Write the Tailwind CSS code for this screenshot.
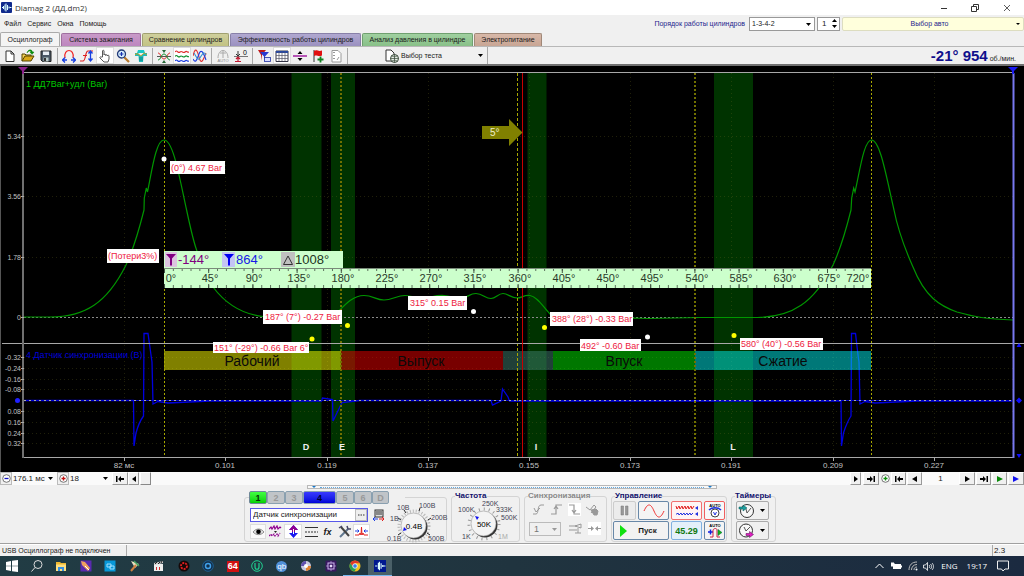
<!DOCTYPE html>
<html lang="ru">
<head>
<meta charset="utf-8">
<title>Diamag 2 (ДД.dm2)</title>
<script src="https://cdn.jsdelivr.net/npm/@tailwindcss/browser@4"></script>
</head>
<body class="flex min-h-screen flex-col bg-[#f0f0f0] font-['Liberation_Sans',Arial,sans-serif] text-[8px] leading-[10px] text-[#1a1a1a]">

<!-- Title bar -->
<header class="flex h-[15px] items-center bg-white pl-px">
  <svg class="size-[11px]" viewBox="0 0 11 11"><rect width="11" height="11" rx="1" fill="#102a8c"/><path d="M1 5.500h1.500V4v3M4 2.500v6M5 1.500v8M6.500 3v5M8 4.500v2M8.500 5.500h2" stroke="#dff" stroke-width="1" fill="none"/></svg>
  <h1 class="ml-[3px] flex-1 font-['Open_Sans',sans-serif] text-[8px] text-[#333]">Diamag 2 (ДД.dm2)</h1>
  <button aria-label="Свернуть" class="grid h-full w-[31px] place-items-center"><svg class="size-2" viewBox="0 0 8 8"><path d="M1 4.500h6" stroke="#333"/></svg></button>
  <button aria-label="Развернуть" class="grid h-full w-[31px] place-items-center"><svg class="size-2" viewBox="0 0 8 8"><path d="M.5 2.500h5v5h-5zM2.500 2V.5h5v5H6" fill="none" stroke="#333"/></svg></button>
  <button aria-label="Закрыть" class="grid h-full w-[34px] place-items-center"><svg class="size-2" viewBox="0 0 8 8"><path d="M1 1l6 6M7 1L1 7" stroke="#333" stroke-width=".8"/></svg></button>
</header>

<!-- Menu and engine settings -->
<div class="flex h-[17px] items-center">
  <nav class="flex flex-1 gap-[6px] pl-1 text-[7px]">
    <button>Файл</button><button>Сервис</button><button>Окна</button><button>Помощь</button>
  </nav>
  <label for="order" class="mr-1 text-[7px] text-[#1c1c8c]">Порядок работы цилиндров</label>
  <div class="relative mr-[2px]">
    <select id="order" class="block h-[14px] w-[66px] appearance-none border border-[#999] bg-white pl-[2px] text-[7px]"><option>1-3-4-2</option></select>
    <svg class="pointer-events-none absolute top-[6px] right-1 h-[3px] w-[5px]" viewBox="0 0 5 3"><path d="M0 0h5L2.500 3z"/></svg>
  </div>
  <div class="mr-[2px] flex h-[14px] w-[23px] border border-[#999] bg-white">
    <input aria-label="Номер цилиндра" value="1" class="w-3 pl-1 text-[8px] outline-none">
    <div class="flex flex-1 flex-col items-center justify-center gap-[2px]">
      <button aria-label="Больше" class="block h-1"><svg class="h-[3px] w-[5px]" viewBox="0 0 5 3"><path d="M0 3h5L2.500 0z"/></svg></button>
      <button aria-label="Меньше" class="block h-1"><svg class="h-[3px] w-[5px]" viewBox="0 0 5 3"><path d="M0 0h5L2.500 3z"/></svg></button>
    </div>
  </div>
  <button class="flex h-[14px] w-[182px] items-center rounded-[2px] border border-[#ddddc0] bg-[#ffffdc] text-[7px] text-[#1c1c8c]"><span class="flex-1">Выбор авто</span><svg class="mr-[3px] h-[2px] w-1" viewBox="0 0 4 2"><path d="M0 0h4L2 2z"/></svg></button>
</div>

<!-- Tabs -->
<nav class="flex h-[14px] items-end gap-px text-[7px]">
  <button class="h-[14px] w-[60px] rounded-t-[2px] border border-b-0 border-[#aaa] bg-[#f4f4f4]">Осциллограф</button>
  <button class="h-[13px] w-[80px] rounded-t-[2px] border border-b-0 border-[#a070a0] bg-linear-to-b from-[#c89ac8] to-[#bd86bf]">Система зажигания</button>
  <button class="h-[13px] w-[87px] rounded-t-[2px] border border-b-0 border-[#a0a070] bg-linear-to-b from-[#cfcf9c] to-[#c2c283]">Сравнение цилиндров</button>
  <button class="h-[13px] w-[131px] rounded-t-[2px] border border-b-0 border-[#8880a8] bg-linear-to-b from-[#b0a8d0] to-[#9a90c0]">Эффективность работы цилиндров</button>
  <button class="h-[13px] w-[111px] rounded-t-[2px] border border-b-0 border-[#70a070] bg-linear-to-b from-[#a0d0a0] to-[#88c088]">Анализ давления в цилиндре</button>
  <button class="h-[13px] w-[68px] rounded-t-[2px] border border-b-0 border-[#a08878] bg-linear-to-b from-[#d8b8a8] to-[#c8a594]">Электропитание</button>
</nav>

<!-- Toolbar -->
<div class="flex h-[20px] items-center border-t border-b-2 border-t-[#b8b8b8] border-b-[#707070] bg-[#f0f0f0] pl-px">
  <button aria-label="Новый" class="grid h-[17px] w-[18px] place-items-center"><svg class="size-[14px]" viewBox="0 0 14 14"><path d="M3 2h5l3 3v7.500H3zM8 2v3h3" fill="#fff" stroke="#333"/></svg></button>
  <button aria-label="Открыть" class="grid h-[17px] w-[18px] place-items-center"><svg class="size-[14px]" viewBox="0 0 14 14"><path d="M1 12V5h3l1 1h5v2" fill="#f4d35a" stroke="#554400"/><path d="M1 12l3-5h9l-3 5z" fill="#d8a818" stroke="#554400"/><path d="M6 4c2-3 4-2 4-1H9l2 2.500L13 3h-1.500C11 0 7 0 6 4z" fill="#0a8a0a" stroke="#0a8a0a" stroke-width=".5"/></svg></button>
  <button aria-label="Сохранить" class="grid h-[17px] w-[18px] place-items-center"><svg class="size-[14px]" viewBox="0 0 14 14"><path d="M2 2h10v10.500H3.500L2 11z" fill="#4a5866" stroke="#222"/><path d="M4 2.500h6V6H4z" fill="#e8eef4"/><path d="M4.500 8.500h5v4h-5z" fill="#bcc"/><path d="M5 9h2v3H5z" fill="#333"/></svg></button>
  <i class="mx-[2px] h-4 w-px bg-[#a8a8a8]"></i>
  <button aria-label="Период" class="grid h-[17px] w-[18px] place-items-center"><svg class="size-[14px]" viewBox="0 0 14 14"><path d="M3 9C1 -1 13 -1 11 9" fill="none" stroke="#f02828" stroke-width="1.200"/><path d="M1 11h4M9 11h4M3 8.500L.5 11 3 13.500M11 8.500l2.500 2.500-2.500 2.500" fill="none" stroke="#1840e0" stroke-width="1.300"/></svg></button>
  <button aria-label="Фронт" class="grid h-[17px] w-[18px] place-items-center"><svg class="size-[14px]" viewBox="0 0 14 14"><path d="M0 12h3c3 0 2-10 5-10h5" fill="none" stroke="#e02020" stroke-width="1.200"/><path d="M3 6.500h4" stroke="#e02020"/><path d="M10.500 2v10M8.500 4.500l2-2.500 2 2.500M8.500 9.500l2 2.500 2-2.500" fill="none" stroke="#1840e0" stroke-width="1.300"/></svg></button>
  <button aria-label="Рука" class="grid h-[17px] w-[18px] place-items-center border border-[#ddd] bg-white"><svg class="size-[14px]" viewBox="0 0 14 14"><path d="M4.500 8V2c0-1 1.500-1 1.500 0v4c0-1 1.700-1 1.700 0v.5c0-1 1.700-1 1.700 0V7c0-1 1.600-1 1.600 0v3l-1 3H6L2 9c-.5-1 .5-1.500 1.200-1z" fill="#fff" stroke="#444" stroke-width=".9"/></svg></button>
  <button aria-label="Лупа" class="grid h-[17px] w-[18px] place-items-center"><svg class="size-[14px]" viewBox="0 0 14 14"><path d="M8 8l5 5" stroke="#b8782a" stroke-width="2.200"/><circle cx="5.500" cy="5" r="4" fill="#d8f0ff" stroke="#223a78" stroke-width="1.300"/><path d="M3.500 5h4M5.500 3v4" stroke="#1830b0" stroke-width="1.200"/></svg></button>
  <button aria-label="Датчик" class="grid h-[17px] w-[18px] place-items-center"><svg class="size-[14px]" viewBox="0 0 14 14"><path d="M4 1h6l1 3H3z" fill="#18c8c8"/><path d="M1 4h3l3 3 3-3h3v3H9.500L9 13H5L4.500 7H1z" fill="#20b8b8"/><path d="M1 6c3-4 5 3 7 0s3-2 5 0" fill="none" stroke="#c8a018" stroke-width="1"/><path d="M5 9h4M5 11h4" stroke="#088"/></svg></button>
  <i class="mx-[2px] h-4 w-px bg-[#a8a8a8]"></i>
  <button aria-label="Центр" class="grid h-[17px] w-[18px] place-items-center"><svg class="size-[14px]" viewBox="0 0 14 14"><path d="M0 7.500h14" stroke="#555"/><path d="M1 4c3 0 3 6 6 6s3-6 6-6" fill="none" stroke="#e03030"/><path d="M1 11c3 0 3-6 6-6s3 6 6 6" fill="none" stroke="#109030"/><path d="M5 1h4L7 4zM5 14h4l-2-3z" fill="#286a38"/></svg></button>
  <button aria-label="Раздельно" class="grid h-[17px] w-[18px] place-items-center border border-[#ddd] bg-white"><svg class="size-[14px]" viewBox="0 0 14 14" fill="none" stroke-width="1.200"><path d="M0 3c2-3 3 2 5 0s3 2 5 0 2 1 4 0" stroke="#e03030"/><path d="M0 7.500c2-3 3 2 5 0s3 2 5 0 2 1 4 0" stroke="#109030"/><path d="M0 12c2-3 3 2 5 0s3 2 5 0 2 1 4 0" stroke="#2040e0"/></svg></button>
  <button aria-label="Совместно" class="grid h-[17px] w-[18px] place-items-center"><svg class="size-[14px]" viewBox="0 0 14 14" fill="none" stroke-width="1.100"><path d="M0 7C2-2 4 0 6 8s4 4 7-4" stroke="#e03030"/><path d="M0 10c3 5 4 0 6-5s4-3 7 6" stroke="#2040e0"/><path d="M1 4c2 3 3 7 5 6s4-10 7-4" stroke="#3090d0"/></svg></button>
  <i class="mx-[2px] h-4 w-px bg-[#a8a8a8]"></i>
  <button aria-label="Авто" class="grid h-[17px] w-[18px] place-items-center"><svg class="size-[14px]" viewBox="0 0 14 14"><path d="M2 9C2-1 12-1 12 9M7 1v8M4 4h6" fill="none" stroke="#aaa"/><text x="7" y="13" font-size="4" text-anchor="middle" fill="#888">AUTO</text></svg></button>
  <button aria-label="Ноль" class="grid h-[17px] w-[18px] place-items-center"><svg class="size-[14px]" viewBox="0 0 14 14"><path d="M0 7.500h14" stroke="#777"/><path d="M4 7V2M2 5l2 2 2-2" fill="none" stroke="#333"/><path d="M4 8v5M2 10l2-2 2 2M1 12.500h6" fill="none" stroke="#c01830" stroke-width="1.200"/><text x="9" y="6" font-size="7">0</text></svg></button>
  <i class="mx-[2px] h-4 w-px bg-[#a8a8a8]"></i>
  <button aria-label="Фильтр" class="grid h-[17px] w-[18px] place-items-center"><svg class="size-[14px]" viewBox="0 0 14 14"><path d="M1 1h8L5 6v6L4 6z" fill="#c01818"/><path d="M3 3h9L8 7.500V13L7 7.500z" fill="#2838d0"/><rect x="7.500" y="8.500" width="6" height="4" fill="#d8dcff" stroke="#2030a0" stroke-width=".8"/></svg></button>
  <button aria-label="Таблица" class="grid h-[17px] w-[18px] place-items-center border border-[#ddd] bg-white"><svg class="size-[14px]" viewBox="0 0 14 14"><path d="M1 2h12v10.500H1z" fill="#fff" stroke="#334"/><path d="M1 3h12" stroke="#2848a0" stroke-width="2"/><path d="M4 3v9M7 3v9M10 3v9M1 6.500h12M1 9.500h12" stroke="#556" stroke-width=".7"/></svg></button>
  <button aria-label="Разделитель" class="grid h-[17px] w-[18px] place-items-center"><svg class="size-[14px]" viewBox="0 0 14 14"><path d="M0 7h14" stroke="#a020a0" stroke-width="1.500"/><path d="M4.500 5L7 2l2.500 3zM4.500 9L7 12l2.500-3z"/></svg></button>
  <button aria-label="Метка" class="grid h-[17px] w-[18px] place-items-center"><svg class="size-[14px]" viewBox="0 0 14 14"><path d="M3 1v12" stroke="#333"/><path d="M3 2c3-2 4 1 8-.5v5c-4 1.500-5-1-8 .5z" fill="#e01010"/><path d="M6.500 10.500h6M9.500 7.500v6" stroke="#108020" stroke-width="1.800"/></svg></button>
  <button aria-label="Отчёт" class="grid h-[17px] w-[18px] place-items-center"><svg class="size-[14px]" viewBox="0 0 14 14"><path d="M3 1.500h6l3 3V13H3z" fill="#fff" stroke="#999"/><path d="M4 3.500h2M4 6.500h2M4 9.500h2M8 11l2-3" stroke="#999"/></svg></button>
  <i class="mx-[2px] h-4 w-px bg-[#a8a8a8]"></i>
  <button class="ml-[34px] flex h-[17px] w-[104px] items-center border-r border-[#a8a8a8] pl-px text-[7px]"><svg class="mr-[2px] size-[14px]" viewBox="0 0 14 14"><path d="M1 1h5l3 3v8H1z" fill="#fff" stroke="#333"/><circle cx="9.500" cy="9.500" r="4" fill="#e8f0e8" stroke="#334433"/><path d="M5.500 9.500h8M9.500 5.500v8M7 7c2 1 3 1 5 0M7 12c2-1 3-1 5 0" stroke="#334433" stroke-width=".7" fill="none"/></svg><span class="flex-1 text-left">Выбор теста</span><svg class="mr-1 h-[3px] w-[5px]" viewBox="0 0 5 3"><path d="M0 0h5L2.500 3z"/></svg></button>
  <p class="ml-auto flex items-baseline gap-[2px] pr-[8px]"><b class="text-[15px] leading-[17px] text-[#10108c]">-21° 954</b><span class="text-[7px]">об./мин.</span></p>
</div>

<!-- Oscillogram -->
<main class="bg-black">
<svg class="block h-auto w-full" viewBox="0 66 1024 406" role="img" aria-label="Осциллограмма">
  <defs>
    <pattern id="ticks" x="164" y="267" width="8.84" height="21" patternUnits="userSpaceOnUse"><path d="M.5 1v3M.5 18v3" stroke="#5a705a"/></pattern>
    <pattern id="long" x="164" y="267" width="44.2" height="21" patternUnits="userSpaceOnUse"><path d="M.5 1v5M.5 17v4" stroke="#405040"/></pattern>
  </defs>
  <path d="M.5 66v406" stroke="#555"/>
  <g fill="#003300"><rect x="291.500" y="73" width="30" height="384"/><rect x="331" y="73" width="24" height="384"/><rect x="527.500" y="73" width="19" height="384"/><rect x="714" y="73" width="39" height="384"/></g>
  <path d="M124.500 73v384M225.500 73v384M327.500 73v384M428.500 73v384M529.500 73v384M630.500 73v384M731.500 73v384M833.500 73v384M934.500 73v384M24 136.500h989M24 196.500h989M24 257.500h989M24 357.500h989M24 368.500h989M24 379.500h989M24 389.500h989M24 411.500h989M24 422.500h989M24 433.500h989M24 443.500h989" stroke="#6a6a20" stroke-opacity=".3" stroke-dasharray="1 3" fill="none"/>
  <path d="M24 317.500h989" stroke="#8a8a8a" stroke-dasharray="2 2"/>

  <!-- Cylinder pressure -->
  <path d="M23 317H50C85 317 107 303 126 265C133 250 139 230 144 210L144.300 198L146.300 188L147.500 192C152 170 156 140 164 140C173 140 179 175 186.600 210C190 226 193 240 196.600 250C202 267 207 277 213 287C225 303 240 314 263 316.500C290 318 325 318 335 315C344 306 352 295.500 364 295.500C373 295.500 376 300 384 300C392 300 397 295.500 405 295.500C413 295.500 418 299 424 298C432 297 436 295 444 295.500C452 296 456 299 463 298C468 297 470 293.500 476 293.500C483 293.500 485 298.500 491 298.500C496 298.500 498 293.500 503 293.500C508 293.500 511 298 517 298C522 298 523 295 530 295.500C538 297 543 307 550 314C556 319 570 318 633 318L648 318.500L700 317.500H757.500C792 317 814 303 833 265C840 250 846 230 851 210L851.700 198L853.700 188L855 192C860 170 864 140 871.500 140C880 140 886 175 894 210C898 230 905 249 913 267C925 297 940 306 957 312C975 317 985 319 1013 320" fill="none" stroke="#009600" stroke-width="1.200"/>

  <!-- Sync sensor -->
  <path d="M23 400.500h989" stroke="#0000c8"/>
  <path d="M23 400.500H133.500L134 446L136 433Q139 422 143.500 416L144 333.500H148L151 355L152 362L153 404L158 401.500L168 403L210 401H321.500L322.500 398L332.500 399.500L333 421L342 402.500L360 400.500H491L492.500 405L501 401L502.500 389L508 397L509.500 401H840.500L841 400L841.500 446L843.500 433Q847 422 851 416L851.500 333.500H855.500L858 355L859 362L860 404L865 401.500L875 403L917 401H1012" fill="none" stroke="#0000e0" stroke-width="1.300"/>
  <path d="M24 400.500h989" stroke="#aaaaaa" stroke-dasharray="2 3"/>

  <!-- Stroke phases -->
  <g fill-opacity=".5"><rect x="164" y="351" width="177" height="19" fill="#ffff00"/><rect x="341" y="351" width="162" height="19" fill="#f00000"/><rect x="503" y="351" width="50" height="19" fill="#408070"/><rect x="553" y="351" width="142" height="19" fill="#00ee00"/><rect x="695" y="351" width="176" height="19" fill="#00f0f0"/></g>
  <g font-size="14" text-anchor="middle" fill="#0a0a0a"><text x="252" y="366">Рабочий</text><text x="421" y="366">Выпуск</text><text x="624" y="366">Впуск</text><text x="783" y="366">Сжатие</text></g>
  <g fill="none" stroke="#a8a800"><path d="M164.500 73v384M871.500 73v384" stroke-dasharray="2 2"/><path d="M341 73v384M695 73v384" stroke="#707000" stroke-width="2" stroke-dasharray="2 2"/><path d="M517.500 73v384" stroke-dasharray="3 2"/></g>

  <!-- Axes -->
  <path d="M22 72.500h991M2 343.500h1022M22 457.500h991" stroke="#a8a8a8"/>
  <path d="M23 73v385" stroke="#707070" stroke-width="2"/><path d="M1013.500 73v385" stroke="#7878f0" stroke-width="2"/>
  <path d="M21 136.500h3M21 196.500h3M21 257.500h3M21 317.500h3M21 357.500h3M21 368.500h3M21 379.500h3M21 389.500h3M21 411.500h3M21 422.500h3M21 433.500h3M21 443.500h3" stroke="#aaa"/>
  <path d="M124.500 457v4M225.500 457v4M327.500 457v4M428.500 457v4M529.500 457v4M630.500 457v4M731.500 457v4M833.500 457v4M934.500 457v4" stroke="#aaa"/>
  <path d="M522.500 73v384" stroke="#c80000"/>
  <path d="M482 126h27v-7l13.500 13.500L509 146v-7h-27z" fill="#808000"/>
  <text x="490" y="136" font-size="10" fill="#eeeecc">5°</text>
  <path d="M18 67h10l-4 4v3h-2v-3z" fill="#8a208a"/><path d="M1008 67h10l-4 4v3h-2v-3z" fill="#1818f0"/>
  <circle cx="17.500" cy="400.500" r="2.500" fill="#2020ff"/>
  <path d="M1016.500 347l2.500-4 2.500 4zM1016 400.500l3-3 3 3-3 3zM1016.500 454h5l-2.500 4z" fill="#1010ff"/>
  <g font-size="7" text-anchor="end" fill="#c0c0c0"><text x="21" y="139">5.34</text><text x="21" y="199">3.56</text><text x="21" y="260">1.78</text><text x="21" y="320">0</text><text x="21" y="360">-0.32</text><text x="21" y="371">-0.24</text><text x="21" y="382">-0.16</text><text x="21" y="392">-0.08</text><text x="21" y="414">0.08</text><text x="21" y="425">0.16</text><text x="21" y="436">0.24</text><text x="21" y="446">0.32</text></g>
  <g font-size="8" text-anchor="middle" fill="#c0c0c0"><text x="124" y="468">82 мс</text><text x="225" y="468">0.101</text><text x="327" y="468">0.119</text><text x="428" y="468">0.137</text><text x="529" y="468">0.155</text><text x="630" y="468">0.173</text><text x="731" y="468">0.191</text><text x="833" y="468">0.209</text><text x="934" y="468">0.227</text></g>
  <g font-size="9" font-weight="bold" text-anchor="middle" fill="#f0f0f0"><text x="306" y="450">D</text><text x="342" y="450">E</text><text x="536" y="450">I</text><text x="733" y="450">L</text></g>
  <text x="26" y="87" font-size="9" fill="#00c800">1 ДД7Bar+удл (Bar)</text>
  <text x="26" y="358" font-size="9" fill="#0000d8">4 Датчик синхронизации (В)</text>

  <!-- Degree ruler -->
  <rect x="164" y="251" width="179" height="17" fill="#ccffcc"/>
  <rect x="165" y="252" width="12" height="15" fill="#dcc4e0"/><path d="M166 254h10l-4 4.500v7h-2v-7z" fill="#800080"/>
  <rect x="222" y="252" width="13" height="15" fill="#c4c4f4"/><path d="M224 254h10l-4 4.500v7h-2v-7z" fill="#0000f0"/>
  <rect x="281" y="252" width="14" height="15" fill="#c0c0c0"/><path d="M283.500 264.500h9l-4.500-8.500z" fill="none" stroke="#333"/>
  <g font-size="13"><text x="178" y="264" fill="#800080">-144°</text><text x="236" y="264" fill="#1818e8">864°</text><text x="295" y="264" fill="#223322">1008°</text></g>
  <rect x="164" y="268" width="707" height="20" fill="#ccffcc"/><rect x="164" y="268" width="707" height="20" fill="url(#ticks)"/><rect x="164" y="268" width="707" height="20" fill="url(#long)"/><path d="M164 268.500h707" stroke="#7a8a7a"/>
  <g font-size="11" text-anchor="middle" fill="#2a3a2a"><text x="171" y="282">0°</text><text x="210" y="282">45°</text><text x="254" y="282">90°</text><text x="299" y="282">135°</text><text x="343" y="282">180°</text><text x="387" y="282">225°</text><text x="431" y="282">270°</text><text x="475" y="282">315°</text><text x="520" y="282">360°</text><text x="564" y="282">405°</text><text x="608" y="282">450°</text><text x="652" y="282">495°</text><text x="697" y="282">540°</text><text x="741" y="282">585°</text><text x="785" y="282">630°</text><text x="829" y="282">675°</text><text x="858" y="282">720°</text></g>

  <!-- Measurement callouts -->
  <g fill="#fff"><rect x="170" y="161" width="55" height="13"/><rect x="107" y="249" width="52" height="14"/><rect x="263" y="310" width="79" height="14"/><rect x="408" y="296" width="59" height="14"/><rect x="550" y="312" width="83" height="14"/><rect x="213" y="342" width="96" height="11"/><rect x="580" y="339" width="61" height="12"/><rect x="740" y="338" width="83" height="12"/></g>
  <g font-size="9" fill="#ee2040"><text x="171" y="171">(0°) 4.67 Bar</text><text x="265" y="320">187° (7°) -0.27 Bar</text><text x="410" y="306">315° 0.15 Bar</text><text x="108" y="259">(Потери3%)</text><text x="552" y="322">388° (28°) -0.33 Bar</text><text x="214" y="351">151° (-29°) -0.66 Bar 6°</text><text x="581" y="349">492° -0.60 Bar</text><text x="741" y="347">580° (40°) -0.56 Bar</text></g>
  <g fill="#fff"><circle cx="164" cy="159" r="2.500"/><circle cx="473.500" cy="311.500" r="2.500"/><circle cx="647.500" cy="337" r="2.500"/></g>
  <g fill="#ffff00"><circle cx="312" cy="339" r="2.500"/><circle cx="347.500" cy="325.500" r="2.500"/><circle cx="544.500" cy="327.500" r="2.500"/><circle cx="734" cy="335.500" r="2.500"/></g>
</svg>
</main>

<!-- Time navigation -->
<div class="flex h-[13px] items-stretch bg-[#fafafa] text-[8px]">
  <button aria-label="Сжать" class="grid w-3 place-items-center border border-[#bbb] bg-[#f0f0f0]"><svg class="size-[9px]" viewBox="0 0 9 9"><circle cx="4.500" cy="4.500" r="3.800" fill="#fff" stroke="#555" stroke-width=".8"/><path d="M2.500 4.500h4" stroke="#1010c0" stroke-width="1.300"/></svg></button>
  <div class="relative flex"><select aria-label="Длительность" class="w-[44px] appearance-none pl-px"><option>176.1 мс</option></select><svg class="pointer-events-none absolute top-[5px] right-[3px] h-[3px] w-[5px]" viewBox="0 0 5 3"><path d="M0 0h5L2.500 3z"/></svg></div>
  <button aria-label="Растянуть" class="ml-px grid w-3 place-items-center border border-[#bbb] bg-[#f0f0f0]"><svg class="size-[9px]" viewBox="0 0 9 9"><circle cx="4.500" cy="4.500" r="3.800" fill="#fff" stroke="#555" stroke-width=".8"/><path d="M2.500 4.500h4M4.500 2.500v4" stroke="#c01010" stroke-width="1.300"/></svg></button>
  <div class="relative flex"><select aria-label="Масштаб" class="w-[42px] appearance-none pl-px"><option>18</option></select><svg class="pointer-events-none absolute top-[5px] right-[3px] h-[3px] w-[5px]" viewBox="0 0 5 3"><path d="M0 0h5L2.500 3z"/></svg></div>
  <button aria-label="В начало" class="ml-px grid w-4 place-items-center border border-[#fff] border-r-[#999] border-b-[#999] bg-[#f0f0f0]"><svg class="h-[6px] w-2" viewBox="0 0 8 6"><path d="M0 0h1.500v6H0zM2 3l3-3v2h3v2H5v2z"/></svg></button>
  <button aria-label="Влево" class="grid w-[11px] place-items-center border border-[#fff] border-r-[#999] border-b-[#999] bg-[#f0f0f0]"><svg class="h-[6px] w-1" viewBox="0 0 4 6"><path d="M4 0v6L0 3z"/></svg></button>
  <button aria-label="Ползунок" class="ml-px w-[11px] border border-[#fff] border-r-[#888] border-b-[#888] bg-[#f0f0f0]"></button>
  <div class="flex-1"></div>
  <button aria-label="Вправо" class="grid w-[11px] place-items-center border border-[#fff] border-r-[#999] border-b-[#999] bg-[#f0f0f0]"><svg class="h-[6px] w-1" viewBox="0 0 4 6"><path d="M0 0v6l4-3z"/></svg></button>
  <button aria-label="В конец" class="ml-[2px] grid w-4 place-items-center border border-[#fff] border-r-[#999] border-b-[#999] bg-[#f0f0f0]"><svg class="h-[6px] w-2" viewBox="0 0 8 6"><path d="M8 0H6.500v6H8zM6 3L3 0v2H0v2h3v2z"/></svg></button>
  <button aria-label="Добавить кадр" class="grid w-3 place-items-center bg-[#f0f0f0]"><svg class="size-[9px]" viewBox="0 0 9 9"><circle cx="4.500" cy="4.500" r="3.800" fill="#fff" stroke="#555" stroke-width=".8"/><path d="M2.500 4.500h4M4.500 2.500v4" stroke="#109010" stroke-width="1.300"/></svg></button>
  <button aria-label="Первый кадр" class="grid w-[15px] place-items-center border border-[#fff] border-r-[#999] border-b-[#999] bg-[#f0f0f0]"><svg class="h-[6px] w-2" viewBox="0 0 8 6"><path d="M0 0h1.500v6H0zM2 3l3-3v2h3v2H5v2z"/></svg></button>
  <button aria-label="Предыдущий кадр" class="ml-px grid w-[15px] place-items-center border border-[#fff] border-r-[#999] border-b-[#999] bg-[#f0f0f0]"><svg class="h-[6px] w-[6px]" viewBox="0 0 6 6"><path d="M5 0v6L0 3z"/></svg></button>
  <output class="grid w-[37px] place-items-center">1</output>
  <button aria-label="Следующий кадр" class="grid w-4 place-items-center border border-[#fff] border-r-[#999] border-b-[#999] bg-[#f0f0f0]"><svg class="h-[6px] w-[6px]" viewBox="0 0 6 6"><path d="M1 0v6l5-3z"/></svg></button>
  <button aria-label="Последний кадр" class="ml-px grid w-[15px] place-items-center border border-[#fff] border-r-[#999] border-b-[#999] bg-[#f0f0f0]"><svg class="h-[6px] w-2" viewBox="0 0 8 6"><path d="M8 0H6.500v6H8zM6 3L3 0v2H0v2h3v2z"/></svg></button>
  <button aria-label="Воспроизвести" class="ml-px grid w-[15px] place-items-center border border-[#fff] border-r-[#999] border-b-[#999] bg-[#f0f0f0]"><svg class="size-[6px]" viewBox="0 0 6 6"><path d="M0 0v6l6-3z" fill="#0a8a0a"/></svg></button>
  <button aria-label="Воспроизвести всё" class="ml-px grid w-4 place-items-center border border-[#fff] border-r-[#999] border-b-[#999] bg-[#f0f0f0]"><svg class="size-[6px]" viewBox="0 0 6 6"><path d="M0 0v6l6-3z" fill="#1010f0"/></svg></button>
</div>

<!-- Control panel -->
<section class="flex flex-1 flex-col border-b border-[#a0a0a0]">
  <div class="mx-auto flex h-1 w-[410px] items-center justify-between border border-[#b8b8b8] bg-[#f8f8f8] px-1"><svg class="h-[2px] w-1" viewBox="0 0 4 2"><path d="M0 0h4L2 2z" fill="#1878c8"/></svg><i class="mx-1 h-px flex-1 border-t border-dotted border-[#60a8e0]"></i><svg class="h-[2px] w-1" viewBox="0 0 4 2"><path d="M0 0h4L2 2z" fill="#1878c8"/></svg></div>
  <div class="flex flex-1 justify-center gap-1 pt-[2px] pr-1 pb-px">

    <fieldset class="h-[51px] w-[203px] rounded-[3px] border border-[#d4d4d4]">
      <legend class="ml-1 flex h-[13px] pr-4 text-[9px] font-bold text-[#999]">
        <button class="w-[18px] rounded-[2px] border border-[#708898] bg-linear-to-b from-[#40ff40] to-[#00d000] text-[#053005]">1</button>
        <button class="w-[18px] rounded-[2px] border border-[#8aa0b0] bg-[#c0c4c8]">2</button>
        <button class="w-[18px] rounded-[2px] border border-[#8aa0b0] bg-[#c0c4c8]">3</button>
        <button class="w-[33px] rounded-[2px] border border-[#8aa0b0] bg-linear-to-b from-[#3838ff] to-[#0000d8] text-[#000030]">4</button>
        <button class="w-[18px] rounded-[2px] border border-[#8aa0b0] bg-[#c0c4c8]">5</button>
        <button class="w-[18px] rounded-[2px] border border-[#8aa0b0] bg-[#c0c4c8]">6</button>
        <button class="w-[17px] rounded-[2px] border border-[#8aa0b0] bg-[#c0c4c8]">D</button>
      </legend>
      <div class="flex pl-[5px]">
        <div class="flex w-[136px] flex-col gap-[2px] pt-1">
          <div class="flex gap-1">
            <div class="flex h-[14px] w-[118px] items-center border border-[#5858e8] bg-white"><input aria-label="Название канала" value="Датчик синхронизации" class="min-w-0 flex-1 pl-[2px] text-[8px] outline-none"><button aria-label="Выбрать датчик" class="grid h-3 w-[12px] place-items-center border border-[#bbb] bg-[#eee]"><svg class="h-[2px] w-2" viewBox="0 0 8 2"><path d="M1 1h1.500M3.500 1H5M6 1h1.500" stroke="#333"/></svg></button></div>
            <button aria-label="Разъём"><svg class="size-[13px]" viewBox="0 0 13 13"><rect x="3" y="1" width="8" height="7" fill="#ddd" stroke="#333"/><path d="M4 3h6M4 5h6" stroke="#333"/><path d="M6 10H2M3 8l-2 2 2 2" fill="none" stroke="#2040e0"/><path d="M7 10h5M10 8l2 2-2 2" fill="none" stroke="#e02020"/></svg></button>
          </div>
          <div class="flex gap-px">
            <button aria-label="Показать" class="grid h-[15px] w-4 place-items-center border border-[#ddd] bg-[#fafafa]"><svg class="size-[13px]" viewBox="0 0 13 13"><path d="M1 7c3-4 8-4 11 0-3 3.500-8 3.500-11 0z" fill="#ddd" stroke="#777" stroke-width=".8"/><circle cx="6.500" cy="6.800" r="2.300"/></svg></button>
            <button aria-label="Инверсия" class="grid h-[15px] w-4 place-items-center"><svg class="size-[13px]" viewBox="0 0 13 13" fill="none" stroke="#900090" stroke-width="1.200"><path d="M0 4l2-2 1 2 2-3 1 3 2-3 1 3 2-2 1 1"/><path d="M0 11l2-2 1 2 2-2 1 2 2-2 1 2 2-3" stroke-dasharray="2 1"/><path d="M5 6h3L6.500 8z" fill="#222" stroke="none"/></svg></button>
            <button aria-label="Смещение" class="grid h-[15px] w-[18px] place-items-center border border-[#ddd] bg-white"><svg class="size-[13px]" viewBox="0 0 13 13"><path d="M2 5l4.500-5L11 5H8v3h3l-4.500 5L2 8h3V5z" fill="#1818f0"/><path d="M2 5l4.500-5L11 5H8v2H5V5z" fill="#900090"/><path d="M6.500 4v5" stroke="#fff"/></svg></button>
            <button aria-label="Линии" class="grid h-[15px] w-4 place-items-center"><svg class="size-[13px]" viewBox="0 0 13 13"><path d="M0 2.500h13M0 11.500h13" stroke="#333"/><path d="M0 7h13" stroke="#333" stroke-dasharray="2 1"/></svg></button>
            <button aria-label="Функция" class="h-[15px] w-[15px] text-[9px] font-bold italic">fx</button>
            <button aria-label="Настройка" class="grid h-[15px] w-4 place-items-center"><svg class="size-[13px]" viewBox="0 0 13 13"><path d="M2 12l8-8" stroke="#607890" stroke-width="2"/><path d="M3 2l8 9" stroke="#444" stroke-width="2"/><path d="M9 1l1 3 3 0M1 3l3-2" stroke="#446" fill="none" stroke-width="1.500"/></svg></button>
            <button aria-label="Фильтр пиков" class="grid h-[15px] w-[17px] place-items-center border border-[#ddd] bg-white"><svg class="size-[13px]" viewBox="0 0 13 13" fill="none"><path d="M0 10h4l1-2 1 2 .5-8 .5 8 1-2 1 2h4" stroke="#e02020"/><path d="M0 6h4L2.500 4.500M4 6L2.500 7.500M13 6H9l1.500-1.500M9 6l1.500 1.500" stroke="#2040e0"/></svg></button>
          </div>
        </div>
        <label class="relative block"><input type="range" aria-label="Чувствительность" class="absolute inset-0 w-full opacity-0">
          <svg class="h-[42px] w-[60px] overflow-visible" viewBox="386 502 60 42"><circle cx="414" cy="524" r="15" fill="none" stroke="#b8b8b8" stroke-width="3" stroke-dasharray="1 2"/><circle cx="415" cy="525" r="12.500" fill="#333"/><circle cx="413.500" cy="523.500" r="12.500" fill="#f4f4f4" stroke="#999" stroke-width=".6"/><path d="M403 529l1-4 3 3z" fill="#1010f0"/><g stroke="#222"><path d="M406 511l-2-3M419 509l1-3M428 518l3-2M401 518l-3-2M401 531l-3 2M427 531l3 2"/></g><g font-size="7" fill="#445"><text x="397" y="508">10В</text><text x="419" y="506">100В</text><text x="390" y="519">1В</text><text x="431" y="518">200В</text><text x="387" y="539">0.1В</text><text x="428" y="539">500В</text></g><text x="414" y="527" font-size="8" text-anchor="middle">0.4В</text></svg></label>
      </div>
    </fieldset>

    <fieldset class="h-[51px] w-[69px] rounded-[3px] border border-[#d4d4d4]">
      <legend class="ml-[3px] text-[8px] font-bold text-[#10106c]">Частота</legend>
      <label class="relative block"><input type="range" aria-label="Частота" class="absolute inset-0 w-full opacity-0">
        <svg class="h-[40px] w-[67px] overflow-visible" viewBox="452 501 67 40"><circle cx="484" cy="524" r="15" fill="none" stroke="#999" stroke-width="3" stroke-dasharray="1 4"/><circle cx="485" cy="525" r="12.500" fill="#333"/><circle cx="483.500" cy="523.500" r="12.500" fill="#f4f4f4" stroke="#999" stroke-width=".6"/><path d="M475 516l4 1-2 3z" fill="#1010f0"/><g font-size="7" fill="#445"><text x="482" y="506">250K</text><text x="458" y="512">100K</text><text x="496" y="512">333K</text><text x="501" y="520">500K</text><text x="462" y="539">1K</text><text x="498" y="539" fill="#aaa">1M</text></g><text x="484" y="527" font-size="8" text-anchor="middle">50K</text></svg></label>
    </fieldset>

    <fieldset class="h-[51px] w-[83px] rounded-[3px] border border-[#d4d4d4]">
      <legend class="ml-[3px] text-[8px] font-bold text-[#888]">Синхронизация</legend>
      <div class="flex flex-col gap-1 px-1">
        <div class="grid h-4 grid-cols-4 place-items-center text-[#999]">
          <button aria-label="Любой фронт"><svg class="size-[13px]" viewBox="0 0 13 13" fill="none" stroke="currentColor"><path d="M1 11h3c3 0 1-9 5-9h3M2 5l2 4 4-4"/></svg></button>
          <button aria-label="Нарастание"><svg class="size-[13px]" viewBox="0 0 13 13" fill="none" stroke="currentColor" stroke-width="1.200"><path d="M1 11h5V2h6M4 6l2-3 2 3"/></svg></button>
          <button aria-label="Спад" class="bg-white"><svg class="size-[13px]" viewBox="0 0 13 13" fill="none" stroke="currentColor" stroke-width="1.200"><path d="M1 2h5v9h6M4 7l2 3 2-3"/></svg></button>
          <button aria-label="Ручная"><svg class="size-[13px]" viewBox="0 0 13 13" fill="none" stroke="currentColor"><path d="M0 4l4 3 4-5 2 2M5 10l5-6"/><path d="M5 7l5-1 2 2-1 4H8z" fill="currentColor"/></svg></button>
        </div>
        <div class="flex h-[15px] items-center">
          <div class="relative mr-2"><select aria-label="Канал" class="block h-[14px] w-[32px] appearance-none border border-[#bbb] bg-[#f0f0f0] pl-1 text-[9px] text-[#777]"><option>1</option></select><svg class="pointer-events-none absolute top-[6px] right-1 h-[3px] w-[5px]" viewBox="0 0 5 3"><path d="M0 0h5L2.500 3z" fill="#999"/></svg></div>
          <button aria-label="Уровень" class="mr-[6px] text-[#999]"><svg class="size-[13px]" viewBox="0 0 13 13" fill="none" stroke="currentColor"><path d="M0 4h8M0 8h8"/><path d="M12 2L6 4l6 2zM6 11h6M9 6v5"/></svg></button>
          <button aria-label="Сдвиг" class="bg-white text-[#999]"><svg class="size-[13px]" viewBox="0 0 13 13"><path d="M0 6h3V4l3 2.500L3 9V7H0zM13 6h-3V4L7 6.500 10 9V7h3z" fill="currentColor"/></svg></button>
        </div>
      </div>
    </fieldset>

    <fieldset class="h-[51px] w-[116px] rounded-[3px] border border-[#d4d4d4]">
      <legend class="ml-[3px] text-[8px] font-bold text-[#10106c]">Управление</legend>
      <div class="flex gap-px pl-px">
        <div class="flex flex-col gap-px">
          <div class="flex gap-[2px]">
            <button aria-label="Пауза" class="grid h-[19px] w-[23px] place-items-center rounded-[2px] border border-[#ccc] bg-[#ececec]"><svg class="size-[11px]" viewBox="0 0 11 11"><path d="M2 1h2.500v9H2zM6.500 1H9v9H6.500z" fill="#999" stroke="#777" stroke-width=".5"/></svg></button>
            <button aria-label="Один период" class="grid h-[19px] w-[31px] place-items-center rounded-[2px] border border-[#6888a8] bg-[#f4f4f4]"><svg class="h-[14px] w-[22px]" viewBox="0 0 22 14"><path d="M1 7C5-2 8 0 11 7s6 9 10 0" fill="none" stroke="#f03030"/></svg></button>
          </div>
          <button class="flex h-[19px] w-[56px] items-center rounded-[2px] border border-[#6888a8] bg-[#f2f2f2] pl-[6px] text-[8px] font-bold"><svg class="h-[12px] w-[7px]" viewBox="0 0 7 12"><path d="M0 0v12l7-6z" fill="#10e010"/></svg><span class="flex-1">Пуск</span></button>
        </div>
        <div class="ml-px flex flex-col gap-px">
          <button aria-label="Непрерывно" class="grid h-[19px] w-[31px] place-items-center rounded-[2px] border border-[#f07070] bg-[#fff4f4]"><svg class="h-[13px] w-6" viewBox="0 0 24 13" fill="none"><path d="M1 2l1 3 2-3 1 3 2-3 1 3 2-3 1 3 2-3 1 3 2-3 1 3 2-3" stroke="#e02020"/><path d="M1 10h1l1-1 1 2 2-2 1 2 2-2 1 2 2-2 1 2 2-2 1 2 2-2" stroke="#2030e0"/><path d="M23 2v4l-3-2zM23 8v4l-3-2z" fill="#2030e0"/></svg></button>
          <output class="grid h-[19px] w-[31px] place-items-center rounded-[2px] border border-[#80b0e0] bg-[#e4f0fa] text-[9px] font-bold text-[#107810]">45.29</output>
        </div>
        <div class="ml-px flex flex-col gap-px">
          <button aria-label="Автонапряжение" class="grid h-[19px] w-[21px] place-items-center rounded-[2px] border border-[#f06060] bg-[#f8f8f8]"><svg class="h-[17px] w-4" viewBox="0 0 16 17"><text x="8" y="5" font-size="4" font-weight="bold" text-anchor="middle">AUTO</text><path d="M2 8c3-3 9-3 12 0" stroke="#2030e0" stroke-width="1.500" fill="none"/><circle cx="8" cy="11" r="4" fill="#fff" stroke="#444"/><path d="M6.500 10L8 13l1.500-3" stroke="#2030e0" fill="none"/></svg></button>
          <button aria-label="Автозапуск" class="grid h-[19px] w-[21px] place-items-center rounded-[2px] border border-[#6888a8] bg-[#f4f4f4]"><svg class="h-[17px] w-4" viewBox="0 0 16 17"><text x="8" y="5" font-size="4" font-weight="bold" text-anchor="middle">AUTO</text><path d="M1 10h5M3.500 7.500v5" stroke="#1020e0" stroke-width="1.500"/><path d="M3 15h3V8c1-2 4-2 4 0v7h3" stroke="#d02040" fill="none"/><path d="M11 7.500v6l4-3z" fill="#10b010" stroke="#064" stroke-width=".5"/></svg></button>
        </div>
      </div>
    </fieldset>

    <fieldset class="h-[51px] w-[45px] rounded-[3px] border border-[#d4d4d4]">
      <legend class="ml-[3px] text-[8px] font-bold text-[#10106c]">Таймеры</legend>
      <div class="flex flex-col gap-px pl-1">
        <button aria-label="Таймер старта" class="flex h-[19px] w-[33px] items-center rounded-[2px] border border-[#aaa] bg-[#f0f0f0] pl-px"><svg class="size-4" viewBox="0 0 16 16"><circle cx="9" cy="8" r="6.500" fill="#f8f8f8" stroke="#333"/><path d="M8 6l1 4 4-5" stroke="#555" fill="none"/><path d="M1 4h4V2l4 3-4 3V6H1z" fill="#20a0a0" stroke="#055" stroke-width=".5"/></svg><svg class="ml-[6px] h-[3px] w-[5px]" viewBox="0 0 5 3"><path d="M0 0h5L2.500 3z"/></svg></button>
        <button aria-label="Таймер остановки" class="flex h-[19px] w-[33px] items-center rounded-[2px] border border-[#aaa] bg-[#f0f0f0] pl-px"><svg class="size-4" viewBox="0 0 16 16"><circle cx="8" cy="7.500" r="6.500" fill="#f8f8f8" stroke="#333"/><path d="M6 4l2 4 4-4" stroke="#555" fill="none"/><path d="M8 10.500h3.500V8.500l4 3-4 3v-2H8z" fill="#e020c0" stroke="#505" stroke-width=".5"/></svg><svg class="ml-[6px] h-[3px] w-[5px]" viewBox="0 0 5 3"><path d="M0 0h5L2.500 3z"/></svg></button>
      </div>
    </fieldset>
  </div>
</section>

<!-- Status bar -->
<footer class="flex h-[12px] items-center border-t border-[#fff] text-[7px]">
  <span class="h-[11px] w-[127px] border-r border-[#aaa] pl-[2px] leading-[11px]">USB Осциллограф не подключен</span>
  <span class="flex-1"></span>
  <span class="h-[11px] w-[32px] border-l border-[#aaa] pl-px text-[8px] leading-[11px]">2.3</span>
</footer>

<!-- Taskbar -->
<nav class="flex h-[20px] items-center bg-linear-to-r from-[#213c44] via-[#20343f] to-[#1b2a40] text-white">
  <div class="grid h-full w-[392px] grid-cols-16">
    <button aria-label="Пуск Windows" class="grid place-items-center"><svg class="size-3" viewBox="0 0 12 12"><path d="M0 2l5-1v4.700H0zM6 .8L12 0v5.700H6zM0 6.300h5V11l-5-1zM6 6.300h6V12l-6-.8z" fill="#fff"/></svg></button>
    <button aria-label="Поиск" class="grid place-items-center"><svg class="size-3" viewBox="0 0 12 12"><circle cx="7" cy="4.500" r="4" fill="none" stroke="#ddd"/><path d="M4 7.500L.5 11.500" stroke="#ddd"/></svg></button>
    <button aria-label="Проводник" class="grid place-items-center"><svg class="size-3" viewBox="0 0 12 12"><path d="M1 2h4l1 1h5v8H1z" fill="#f0b830"/><path d="M1 4.500h10V11H1z" fill="#ffe080"/><path d="M3 7h6v4H7V9H5v2H3z" fill="#3890e0"/></svg></button>
    <button aria-label="Редактор" class="grid place-items-center"><svg class="size-3" viewBox="0 0 12 12"><rect x=".5" y=".5" width="11" height="11" fill="#5a2ab0"/><path d="M1 1l4 1 5 6-2 3-6-6z" fill="#f0a060"/><path d="M5 6l4 4" stroke="#fff"/></svg></button>
    <button aria-label="Сервис" class="grid place-items-center"><svg class="size-3" viewBox="0 0 12 12"><rect x=".5" y=".5" width="11" height="11" fill="#0898d8"/><path d="M3 4h4v3H3zM6 6h4v3H6z" fill="none" stroke="#9fe0ff"/></svg></button>
    <button aria-label="Инструмент" class="grid place-items-center"><svg class="size-3" viewBox="0 0 12 12"><path d="M2 1l8 3-4 4z" fill="#e8e0c0"/><path d="M2 11l5-6" stroke="#d08040" stroke-width="2"/><path d="M5 1l5 5" stroke="#40a060" stroke-width="1.500"/></svg></button>
    <button aria-label="Видео" class="grid place-items-center"><svg class="size-3" viewBox="0 0 12 12"><path d="M1 4h9v7H1z" fill="#eee"/><path d="M1 3l9-2v2L1 5z" fill="#ccc"/><path d="M2 4l2-2M5 4l2-2M8 3l1-2" stroke="#222"/><path d="M3 7h1v3H3zM6 7h1v3H6z" fill="#d03030"/></svg></button>
    <button aria-label="Запись" class="grid place-items-center"><svg class="size-3" viewBox="0 0 12 12"><circle cx="6" cy="6" r="5.500" fill="#150808"/><circle cx="6" cy="6" r="3" fill="none" stroke="#e02020" stroke-width="1.800" stroke-dasharray="2 1"/></svg></button>
    <button aria-label="Настройки" class="grid place-items-center"><svg class="size-3" viewBox="0 0 12 12"><circle cx="6" cy="6" r="5.300" fill="#12304c" stroke="#2070b0" stroke-width=".7"/><circle cx="6" cy="6" r="2.500" fill="none" stroke="#40a0e8" stroke-width="1.500"/></svg></button>
    <button aria-label="AIDA64" class="grid place-items-center"><span class="grid h-[11px] w-[12px] place-items-center bg-[#d01010] text-[9px] leading-[11px] font-bold">64</span></button>
    <button aria-label="Удаление" class="grid place-items-center"><svg class="size-3" viewBox="0 0 12 12"><circle cx="6" cy="6" r="5.300" fill="none" stroke="#20d090"/><path d="M4 3v4c0 3 4 3 4 0V3" fill="none" stroke="#20d090" stroke-width="1.200"/></svg></button>
    <button aria-label="qBittorrent" class="grid place-items-center"><span class="grid size-[11px] place-items-center rounded-full bg-[#5090d8] text-[8px] leading-[9px]">qb</span></button>
    <button aria-label="Браузер" class="grid place-items-center"><svg class="size-3" viewBox="0 0 12 12"><circle cx="6" cy="6" r="5" fill="#c8c8e0"/><path d="M1 6a5 5 0 0 1 5-5v5z" fill="#6050b0"/><path d="M6 11a5 5 0 0 0 5-5H6z" fill="#e08030"/><circle cx="6" cy="6" r="2" fill="#fff"/></svg></button>
    <button aria-label="Процессор" class="grid place-items-center"><svg class="size-3" viewBox="0 0 12 12"><rect x=".5" y=".5" width="11" height="11" rx="1" fill="#381860"/><rect x="3" y="3" width="6" height="6" fill="none" stroke="#d0b8f0"/><path d="M5 5h2v2H5zM6 1v2M6 9v2M1 6h2M9 6h2" stroke="#d0b8f0" fill="#fff" stroke-width=".6"/></svg></button>
    <button aria-label="Chrome" class="grid place-items-center border-b border-[#78b8f0]"><svg class="size-3" viewBox="0 0 12 12"><circle cx="6" cy="6" r="5.500" fill="#f0c020"/><path d="M1.200 3.300a5.500 5.500 0 0 1 9.600 0H6L4 7z" fill="#e03828"/><path d="M1.200 3.300A5.500 5.500 0 0 0 5.500 11.500L8 7H4z" fill="#28a050"/><circle cx="6" cy="6" r="2.300" fill="#3880e8" stroke="#fff" stroke-width=".8"/></svg></button>
    <button aria-label="Diamag 2" class="grid place-items-center border-b border-[#78b8f0] bg-[#4a6068]"><svg class="size-3" viewBox="0 0 11 11"><rect width="11" height="11" fill="#001890"/><path d="M1 5.500h2M4 2.500v6M5 1.500v8M6.500 3v5M8 4.500v2M8.500 5.500h2" stroke="#dff" fill="none"/></svg></button>
  </div>
  <div class="ml-auto flex h-full items-center font-['Open_Sans',sans-serif] text-[8px]">
    <button aria-label="Скрытые значки" class="mr-[7px]"><svg class="h-[6px] w-[9px]" viewBox="0 0 9 6"><path d="M.5 5L4.500 1l4 4" fill="none" stroke="#fff"/></svg></button>
    <button aria-label="Батарея" class="mr-[6px]"><svg class="h-2 w-[11px]" viewBox="0 0 11 8"><path d="M2 2h8v5H2z" fill="#fff"/><path d="M0 1h3v3H0zM10.500 3.500v2" stroke="#fff" fill="#fff"/></svg></button>
    <button aria-label="Wi-Fi" class="mr-[5px]"><svg class="size-[10px]" viewBox="0 0 10 10" fill="none" stroke="#bbb"><path d="M1 9C1 4 4 1 9 1M3.500 9c0-3 2-5.500 5.500-5.500M6 9c0-2 1-3 3-3"/><circle cx="8.500" cy="8.500" r="1" fill="#fff" stroke="none"/></svg></button>
    <button aria-label="Громкость" class="mr-[7px]"><svg class="size-[11px]" viewBox="0 0 11 11" fill="none" stroke="#fff" stroke-width=".8"><path d="M.5 4h2l2-2.500v8L2.500 7h-2zM6 4c1 1 1 2 0 3M7.500 3c1.500 1.500 1.500 3.500 0 5M9 2c2 2 2 5 0 7"/></svg></button>
    <button class="mr-[9px]">ENG</button>
    <time class="mr-[10px]">19:17</time>
    <button aria-label="Уведомления" class="mr-[15px]"><svg class="size-3" viewBox="0 0 12 12"><path d="M.5 1h11v8H8l-2 2-1.500-2h-4z" fill="none" stroke="#eee"/></svg></button>
  </div>
</nav>
</body>
</html>
